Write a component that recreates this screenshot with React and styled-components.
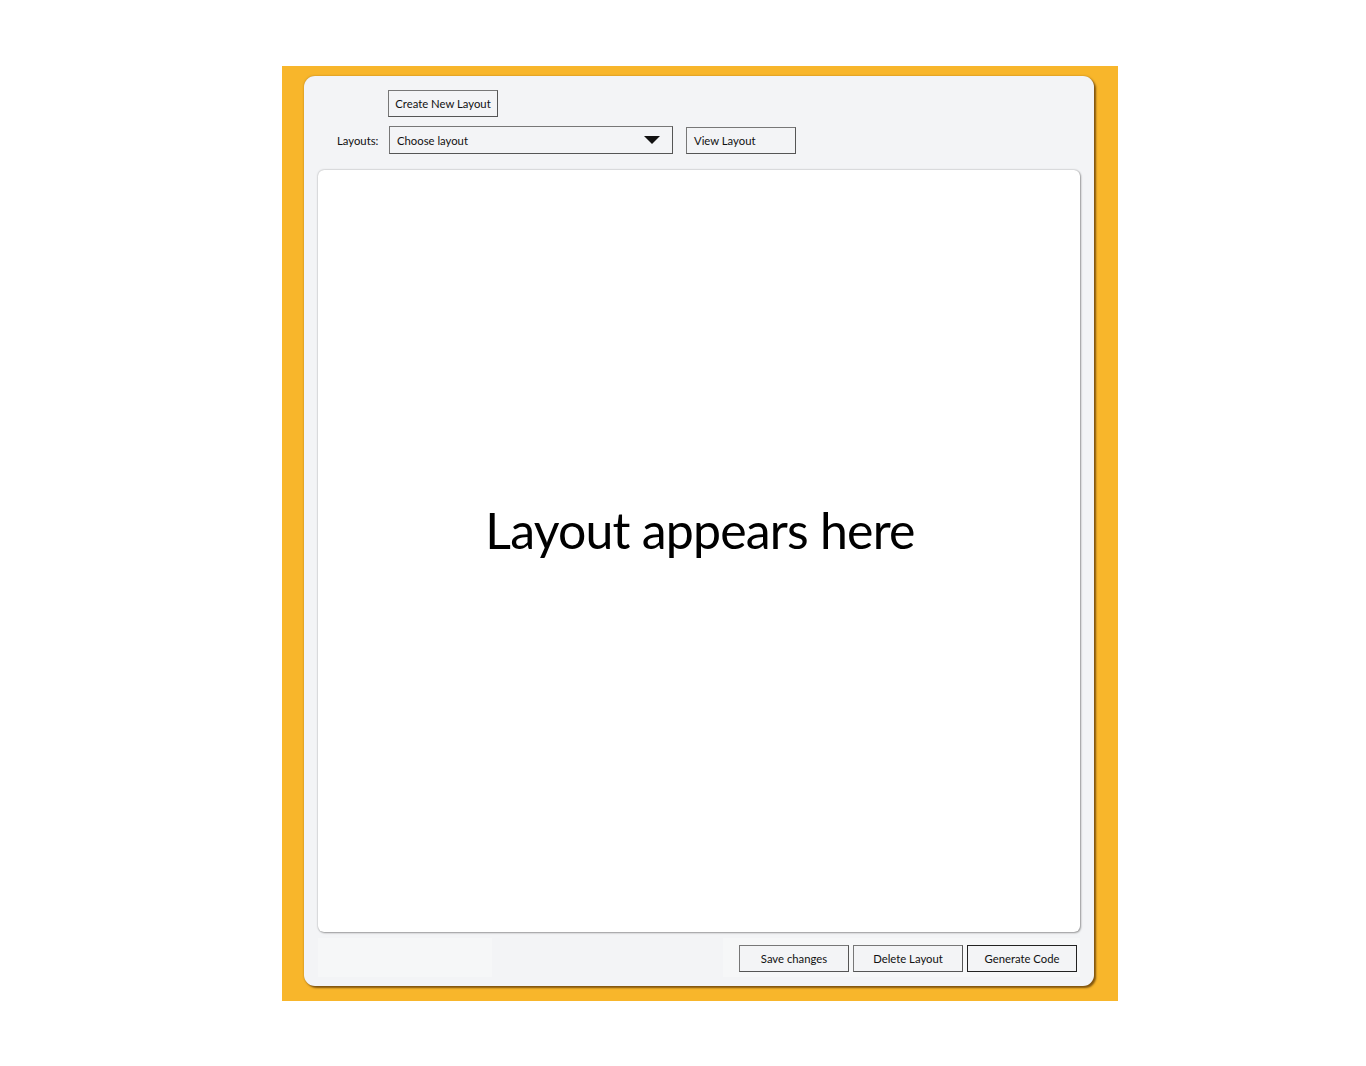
import React from "react";
import styled, { createGlobalStyle } from "styled-components";

const Global = createGlobalStyle`
  html, body { margin: 0; padding: 0; background: #ffffff; }
  body { font-family: "Lato", "Open Sans", sans-serif; }
`;

const Page = styled.div`
  width: 1366px;
  height: 1066px;
  padding-top: 66px;
  padding-left: 282px;
  box-sizing: border-box;
`;

const Frame = styled.div`
  width: 836px;
  height: 935px;
  background: #f8b62b;
  box-sizing: border-box;
  padding: 10px 0 0 22px;
`;

const Panel = styled.div`
  width: 790px;
  height: 910px;
  background: #f3f4f6;
  border-radius: 11px;
  box-shadow: 2px 2px 2px rgba(110, 70, 10, 0.85), 0 0 2px rgba(110, 70, 10, 0.5);
  box-sizing: border-box;
  padding: 14px 14px 0 14px;
  display: flex;
  flex-direction: column;
`;

const Toolbar = styled.div`
  display: flex;
  flex-direction: column;
  gap: 9px;
  height: 80px;
`;

const Row = styled.div`
  display: flex;
  align-items: center;
  padding-left: ${(p) => p.$indent || 0}px;
`;

const Label = styled.span`
  font-size: 11.3px;
  color: #111;
  width: 71px;
  padding-left: 19px;
  box-sizing: border-box;
`;

const Button = styled.button`
  width: 110px;
  height: 27px;
  box-sizing: border-box;
  background: #f3f4f6;
  border: 1.5px solid ${(p) => (p.$dark ? "#222" : "#777")};
  border-right-color: ${(p) => (p.$dark ? "#222" : "#555")};
  border-bottom-color: ${(p) => (p.$dark ? "#222" : "#555")};
  font-family: "Lato", "Open Sans", sans-serif;
  font-size: 11.3px;
  color: #111;
  padding: 0;
  text-align: ${(p) => (p.$left ? "left" : "center")};
  padding-left: ${(p) => (p.$left ? "7px" : "0")};
  cursor: pointer;
`;

const Select = styled.div`
  width: 284px;
  height: 28px;
  box-sizing: border-box;
  border: 1.5px solid #777;
  border-right-color: #555;
  border-bottom-color: #555;
  display: flex;
  align-items: center;
  justify-content: space-between;
  padding: 0 12px 0 7px;
  font-size: 11.3px;
  color: #111;
  margin-right: 13px;
`;

const Canvas = styled.div`
  width: 762px;
  height: 762px;
  background: #ffffff;
  border-radius: 6px;
  box-shadow: 0 0 2px rgba(0, 0, 0, 0.35), 1px 1px 2px rgba(0, 0, 0, 0.3);
  display: flex;
  align-items: center;
  justify-content: center;
`;

const Placeholder = styled.div`
  font-family: "Lato", "Open Sans", sans-serif;
  font-size: 50px;
  color: #000;
  letter-spacing: -0.8px;
  margin-left: 2px;
  margin-top: -42px;
`;

const Footer = styled.div`
  display: flex;
  justify-content: space-between;
  margin-top: 6px;
  height: 39px;
`;

const Shade = styled.div`
  width: ${(p) => p.$w}px;
  background: #f6f7f8;
`;

const Actions = styled.div`
  display: flex;
  gap: 4px;
  padding: 7px 3px 0 16px;
  background: #f6f7f8;
`;

export default function App() {
  return (
    <Page>
      <Global />
      <Frame>
        <Panel>
          <Toolbar>
            <Row $indent={70}>
              <Button>Create New Layout</Button>
            </Row>
            <Row>
              <Label>Layouts:</Label>
              <Select>
                <span>Choose layout</span>
                <svg width="16" height="9" viewBox="0 0 16 9">
                  <polygon points="0,0 16,0 8,8" fill="#111" />
                </svg>
              </Select>
              <Button $left>View Layout</Button>
            </Row>
          </Toolbar>
          <Canvas>
            <Placeholder>Layout appears here</Placeholder>
          </Canvas>
          <Footer>
            <Shade $w={174} />
            <Actions>
              <Button>Save changes</Button>
              <Button>Delete Layout</Button>
              <Button $dark>Generate Code</Button>
            </Actions>
          </Footer>
        </Panel>
      </Frame>
    </Page>
  );
}
